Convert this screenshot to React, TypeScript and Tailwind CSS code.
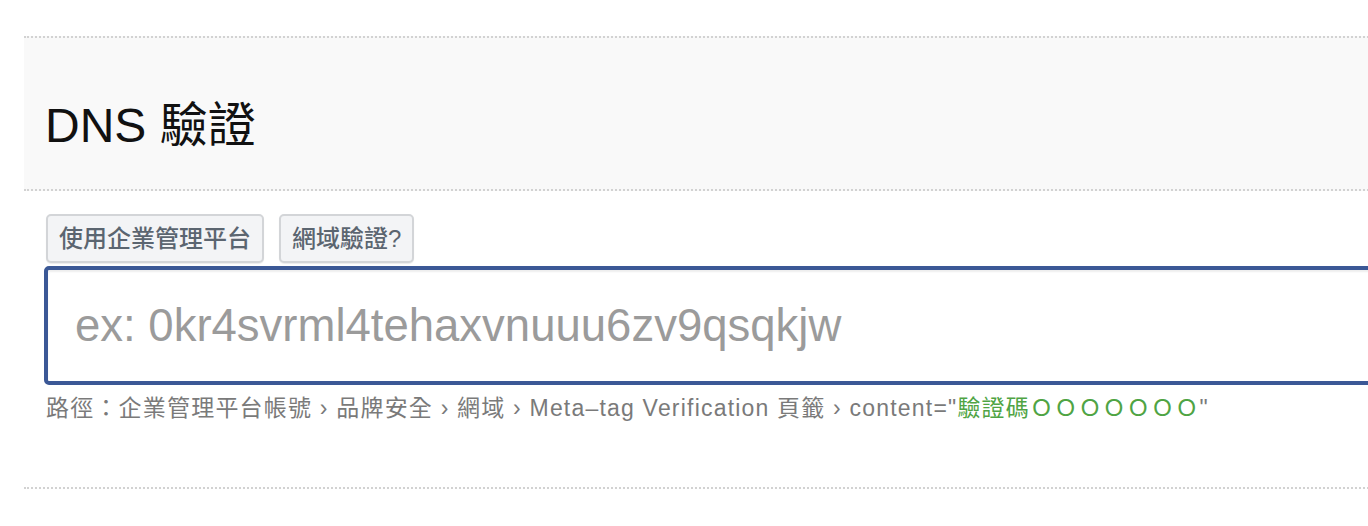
const FONT = 'font-["Liberation_Sans","Noto_Sans_CJK_TC",sans-serif]'

function ToolButton({ label }: { label: string }) {
  return (
    <button
      type="button"
      className="h-[49px] px-[11px] rounded-[5px] border-2 border-[#d3d5d8] bg-[#f3f4f6] text-[24px] font-medium text-[#5b6570] leading-none shadow-[0_1px_1px_rgba(0,0,0,0.08)]"
    >
      {label}
    </button>
  )
}

export default function App() {
  return (
    <div className={`min-h-screen bg-white overflow-hidden ${FONT}`}>
      <div className="ml-6 w-[1500px] pt-9">
        {/* Header */}
        <div className="h-[155px] bg-[#f9f9f9] border-y-2 border-dotted border-[#d2d2d2] flex items-center pl-[21px] pt-[24px]">
          <h1 className="text-[48px] font-normal text-[#111] leading-none">DNS 驗證</h1>
        </div>

        {/* Form */}
        <div className="pl-5 pt-[23px]">
          <div className="flex gap-[15px] pl-[2px]">
            <ToolButton label="使用企業管理平台" />
            <ToolButton label="網域驗證?" />
          </div>

          <input
            type="text"
            placeholder="ex: 0kr4svrml4tehaxvnuuu6zv9qsqkjw"
            className="mt-[3px] block w-full h-[119px] rounded-[5px] border-4 border-[#3b5896] bg-white pl-[27px] text-[45.5px] text-[#333] placeholder:text-[#9b9b9b] outline-none shadow-[inset_0_2px_2px_rgba(0,0,0,0.07)]"
          />

          <p className="mt-[10px] pl-[2px] text-[23px] tracking-[1.2px] text-[#7a7a7a] leading-[26px]">
            路徑：企業管理平台帳號 › 品牌安全 › 網域 › Meta–tag Verification 頁籤 › content="
            <span className="text-[#4fa444]">驗證碼ＯＯＯＯＯＯＯ</span>"
          </p>
        </div>

        <div className="mt-[66px] border-t-2 border-dotted border-[#d2d2d2]" />
      </div>
    </div>
  )
}
